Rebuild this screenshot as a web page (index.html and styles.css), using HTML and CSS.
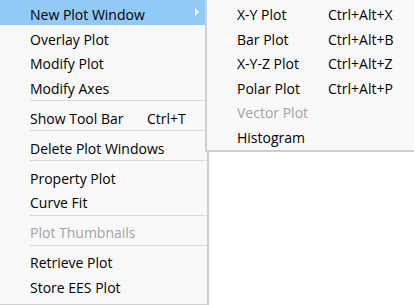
FILE: index.html
```html
<!DOCTYPE html>
<html lang="en">
<head>
  <meta charset="UTF-8" />
  <title>Plot Menu</title>
  <link rel="stylesheet" href="styles.css">
</head>
<body>

  <div class="menu">
    <div class="item active">
      <span class="label">New Plot Window</span>
      <span class="arrow"></span>
    </div>
    <div class="item"><span class="label">Overlay Plot</span></div>
    <div class="item"><span class="label">Modify Plot</span></div>
    <div class="item"><span class="label">Modify Axes</span></div>
    <div class="sep"></div>
    <div class="item"><span class="label">Show Tool Bar</span><span class="key">Ctrl+T</span></div>
    <div class="sep"></div>
    <div class="item"><span class="label">Delete Plot Windows</span></div>
    <div class="sep"></div>
    <div class="item"><span class="label">Property Plot</span></div>
    <div class="item"><span class="label">Curve Fit</span></div>
    <div class="sep"></div>
    <div class="item disabled"><span class="label">Plot Thumbnails</span></div>
    <div class="sep"></div>
    <div class="item"><span class="label">Retrieve Plot</span></div>
    <div class="item"><span class="label">Store EES Plot</span></div>

    <div class="submenu">
      <div class="item"><span class="label">X-Y Plot</span><span class="key">Ctrl+Alt+X</span></div>
      <div class="item"><span class="label">Bar Plot</span><span class="key">Ctrl+Alt+B</span></div>
      <div class="item"><span class="label">X-Y-Z Plot</span><span class="key">Ctrl+Alt+Z</span></div>
      <div class="item"><span class="label">Polar Plot</span><span class="key">Ctrl+Alt+P</span></div>
      <div class="item disabled"><span class="label">Vector Plot</span></div>
      <div class="item"><span class="label">Histogram</span></div>
    </div>
  </div>

</body>
</html>
```

FILE: styles.css
```css
body {
  margin: 0;
  background: #ffffff;
  font-family: 'Open Sans', 'Noto Sans', sans-serif;
  font-size: 14px;
  color: #000;
}

.menu {
  position: relative;
  width: 207px;
  background: #f9f9f9;
  border-right: 2px solid #cfcfcf;
  border-bottom: 2px solid #cfcfcf;
  padding-bottom: 7px;
}

.item {
  box-sizing: border-box;
  display: flex;
  align-items: center;
  height: 24.5px;
  padding-top: 5px;
  padding-left: 30px;
  white-space: nowrap;
}

.item .label {
  width: 117px;
}

.item.active {
  background: #91c9f7;
}

.item.disabled {
  color: #a3a3a3;
}

.arrow {
  margin-left: 48px;
  margin-top: -5px;
  width: 0;
  height: 0;
  border-top: 4px solid transparent;
  border-bottom: 4px solid transparent;
  border-left: 4px solid #ffffff;
}

.sep {
  height: 5.5px;
  margin-left: 30px;
  display: flex;
  align-items: center;
}

.sep::after {
  content: "";
  flex: 1;
  height: 1px;
  background: #d9d9d9;
}

.submenu {
  position: absolute;
  left: 205px;
  top: 0;
  width: 220px;
  background: #f9f9f9;
  border-left: 2px solid #cfcfcf;
  border-bottom: 2px solid #cfcfcf;
  padding-bottom: 3px;
}

.submenu .item .label {
  width: 91px;
}
```
